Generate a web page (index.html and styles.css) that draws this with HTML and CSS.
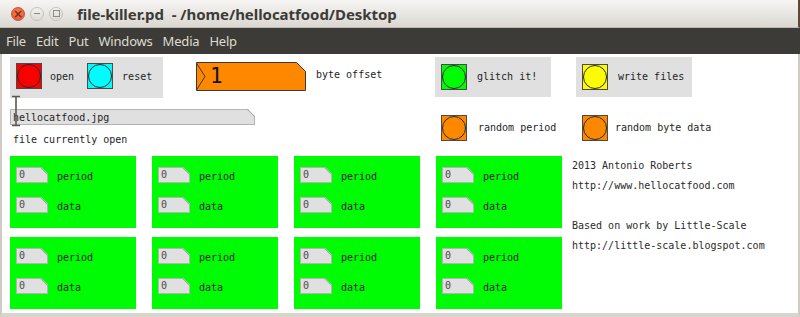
FILE: index.html
```html
<!DOCTYPE html>
<html lang="en">

<head>
    <meta charset="UTF-8">
    <meta name="viewport" content="width=device-width, initial-scale=1.0">
    <title>file-killer.pd</title>
    <link rel="stylesheet" href="styles.css">
</head>

<body>
    <div class="window">
        <!-- title bar -->
        <div class="titlebar">
            <div class="controls">
                <span class="ctl close">&times;</span>
                <span class="ctl min"><i class="dash"></i></span>
                <span class="ctl max"><i class="sq"></i></span>
            </div>
            <div class="title">file-killer.pd&nbsp; - /home/hellocatfood/Desktop</div>
        </div>

        <!-- menu -->
        <div class="menubar">
            <span>File</span><span>Edit</span><span>Put</span><span>Windows</span><span>Media</span><span>Help</span>
        </div>

        <!-- patch canvas -->
        <div class="canvas">
            <div class="row top">
                <div class="gbox main">
                    <div class="bang red"></div>
                    <span class="lbl open">open</span>
                    <div class="bang cyan"></div>
                    <span class="lbl reset">reset</span>
                </div>
                <div class="numbox">
                    <svg class="shape" width="110" height="29" viewBox="0 0 110 29">
                        <polygon points="0.5,0.5 100.5,0.5 109.5,9.5 109.5,28.5 0.5,28.5" fill="#ff8800" stroke="#3a3a3a" />
                        <polyline points="0.5,1 9,14.5 0.5,28" fill="none" stroke="#3a3a3a" />
                    </svg>
                    <span class="num">1</span>
                </div>
                <span class="lbl offset">byte offset</span>
                <div class="gbox glitch">
                    <div class="bang green"></div>
                    <span class="lbl">glitch it!</span>
                </div>
                <div class="gbox write">
                    <div class="bang yellow"></div>
                    <span class="lbl">write files</span>
                </div>
            </div>

            <div class="row mid">
                <div class="filecol">
                    <div class="symbol">hellocatfood.jpg</div>
                    <div class="lbl note">file currently open</div>
                </div>
                <div class="randgroup period">
                    <div class="bang orange"></div>
                    <span class="lbl">random period</span>
                </div>
                <div class="randgroup bytes">
                    <div class="bang orange"></div>
                    <span class="lbl">random byte data</span>
                </div>
            </div>

            <div class="row bottom">
                <div class="panels">
                    <div class="panel">
                        <div class="prow"><div class="small">0</div><span class="lbl">period</span></div>
                        <div class="prow"><div class="small">0</div><span class="lbl">data</span></div>
                    </div>
                    <div class="panel">
                        <div class="prow"><div class="small">0</div><span class="lbl">period</span></div>
                        <div class="prow"><div class="small">0</div><span class="lbl">data</span></div>
                    </div>
                    <div class="panel">
                        <div class="prow"><div class="small">0</div><span class="lbl">period</span></div>
                        <div class="prow"><div class="small">0</div><span class="lbl">data</span></div>
                    </div>
                    <div class="panel">
                        <div class="prow"><div class="small">0</div><span class="lbl">period</span></div>
                        <div class="prow"><div class="small">0</div><span class="lbl">data</span></div>
                    </div>
                    <div class="panel">
                        <div class="prow"><div class="small">0</div><span class="lbl">period</span></div>
                        <div class="prow"><div class="small">0</div><span class="lbl">data</span></div>
                    </div>
                    <div class="panel">
                        <div class="prow"><div class="small">0</div><span class="lbl">period</span></div>
                        <div class="prow"><div class="small">0</div><span class="lbl">data</span></div>
                    </div>
                    <div class="panel">
                        <div class="prow"><div class="small">0</div><span class="lbl">period</span></div>
                        <div class="prow"><div class="small">0</div><span class="lbl">data</span></div>
                    </div>
                    <div class="panel">
                        <div class="prow"><div class="small">0</div><span class="lbl">period</span></div>
                        <div class="prow"><div class="small">0</div><span class="lbl">data</span></div>
                    </div>
                </div>
                <div class="credits">
                    <div>2013 Antonio Roberts</div>
                    <div>http://www.hellocatfood.com</div>
                    <div class="gap"></div>
                    <div>Based on work by Little-Scale</div>
                    <div>http://little-scale.blogspot.com</div>
                </div>
            </div>

            <!-- mouse cursor -->
            <svg class="cursor" width="10" height="32" viewBox="0 0 10 32">
                <path d="M1 1.5 H9 M5 1.5 V30.5 M1 30.5 H9" stroke="#5a5a50" stroke-width="1.6" fill="none" />
            </svg>
        </div>
    </div>
</body>

</html>
```

FILE: styles.css
```css
/* colours */
:root {
    --title-top: #f6f5f3;
    --title-bottom: #dbd8d2;
    --title-text: #3c3b37;
    --menu-bg: #3c3b37;
    --menu-text: #dfdbd2;
    --frame: #cfcbc4;
    --box-gray: #e0e0e0;
    --pd-green: #00fc04;
    --ink: #1e1e1e;
}

html,
body {
    margin: 0;
    height: 100%;
    background: #ffffff;
}

.window {
    width: 800px;
    height: 317px;
    display: flex;
    flex-direction: column;
    overflow: hidden;
}

/* title bar */
.titlebar {
    height: 27px;
    flex: none;
    display: flex;
    align-items: center;
    background: linear-gradient(var(--title-top), var(--title-bottom));
    border-bottom: 1px solid #bfbab2;
    border-right: 2px solid #5b4a3a;
    box-sizing: content-box;
}

.controls {
    display: flex;
    gap: 5px;
    margin-left: 11px;
}

.ctl {
    width: 14px;
    height: 14px;
    border-radius: 50%;
    box-sizing: border-box;
    display: flex;
    align-items: center;
    justify-content: center;
    position: relative;
}

.ctl.close {
    background: radial-gradient(circle at 50% 35%, #f4815a, #e4532a);
    border: 1px solid #c9522e;
    color: #7a2c14;
    font: bold 12px/1 "DejaVu Sans", sans-serif;
}

.ctl.min,
.ctl.max {
    background: linear-gradient(#f3f2f0, #dddad5);
    border: 1px solid #c6c1b9;
}

.ctl .dash {
    width: 6px;
    height: 1px;
    background: #8d8a83;
}

.ctl .sq {
    width: 5px;
    height: 5px;
    border: 1px solid #8d8a83;
}

.title {
    margin-left: 14px;
    font: bold 15px "Noto Sans", sans-serif;
    letter-spacing: -0.05px;
    color: var(--title-text);
    white-space: pre;
}

/* menu */
.menubar {
    height: 26px;
    flex: none;
    display: flex;
    align-items: center;
    gap: 10px;
    padding-left: 6px;
    background: var(--menu-bg);
    color: var(--menu-text);
    font: 13px "Noto Sans", sans-serif;
    letter-spacing: -0.2px;
}

/* canvas */
.canvas {
    position: relative;
    flex: 1;
    border-left: 2px solid var(--frame);
    border-right: 2px solid var(--frame);
    border-bottom: 4px solid #d8d4ce;
    background: #ffffff;
    font: 10px/12px "DejaVu Sans Mono", monospace;
    color: var(--ink);
}

.row {
    display: flex;
    align-items: flex-start;
}

.lbl {
    white-space: pre;
    line-height: 12px;
}

.gbox {
    background: var(--box-gray);
    display: flex;
    align-items: center;
    box-sizing: border-box;
    padding: 6px;
    align-self: flex-start;
}

/* bangs */
.bang {
    width: 26px;
    height: 26px;
    flex: none;
    box-sizing: border-box;
    border: 1px solid #4a4a4a;
    position: relative;
}

.bang::before {
    content: "";
    position: absolute;
    inset: 0;
    border: 1px solid #2a2a2a;
    border-radius: 50%;
}

.bang.red { background: #fc0000; }
.bang.cyan { background: #00fcfc; }
.bang.green { background: #00fc04; }
.bang.yellow { background: #fcfc00; }
.bang.orange { background: #fc8800; }

/* top row */
.row.top {
    height: 44px;
    padding-top: 3px;
    box-sizing: border-box;
}

.gbox.main {
    width: 153px;
    height: 41px;
    margin-left: 8px;
    align-items: flex-start;
}

.gbox.main .lbl {
    margin-top: 8px;
}

.lbl.open {
    margin-left: 8px;
    margin-right: 13px;
}

.lbl.reset {
    margin-left: 9px;
}

.numbox {
    position: relative;
    width: 110px;
    height: 29px;
    margin-left: 33px;
    margin-top: 5px;
}

.numbox .shape {
    position: absolute;
    top: 0;
    left: 0;
}

.numbox .num {
    position: relative;
    display: block;
    padding-left: 14px;
    font: 21px/29px "DejaVu Sans Mono", monospace;
    color: #111111;
}

.lbl.offset {
    width: 109px;
    margin-left: 10px;
    margin-top: 12px;
}

.gbox.glitch {
    width: 116px;
    height: 40px;
    margin-left: 10px;
    padding-top: 7px;
    align-items: flex-start;
}

.gbox.write {
    width: 116px;
    height: 40px;
    margin-left: 25px;
    padding-top: 7px;
    align-items: flex-start;
}

.gbox.glitch .lbl,
.gbox.write .lbl {
    margin-left: 10px;
    margin-top: 7px;
}

/* middle row */
.row.mid {
    height: 52px;
}

.filecol {
    width: 425px;
    margin-left: 8px;
    flex: none;
}

.symbol {
    position: relative;
    width: 245px;
    height: 16px;
    margin-top: 11px;
    box-sizing: border-box;
    padding-left: 2px;
    line-height: 15px;
    background: var(--box-gray);
    border: 1px solid #b4b4b4;
    clip-path: polygon(0 0, calc(100% - 7px) 0, 100% 7px, 100% 100%, 0 100%);
}

.symbol::after,
.small::after {
    content: "";
    position: absolute;
    top: -1px;
    right: -1px;
    width: 8px;
    height: 8px;
    background: linear-gradient(45deg, transparent calc(50% - 0.8px), #a8a8a8 50%, transparent calc(50% + 0.8px));
}

.lbl.note {
    margin-top: 9px;
    margin-left: 3px;
}

.randgroup {
    display: flex;
    align-items: center;
    margin-top: 17px;
    flex: none;
}

.randgroup.period {
    width: 141px;
    margin-left: 6px;
}

.randgroup.period .lbl {
    margin-left: 11px;
}

.randgroup.bytes .lbl {
    margin-left: 7px;
}

/* green panels */
.row.bottom {
    padding-top: 6px;
}

.panels {
    margin-left: 8px;
    display: grid;
    grid-template-columns: repeat(4, 126px);
    grid-auto-rows: 72px;
    column-gap: 16px;
    row-gap: 9px;
}

.panel {
    background: var(--pd-green);
    box-sizing: border-box;
    padding: 11px 0 0 6px;
    display: flex;
    flex-direction: column;
    gap: 14px;
}

.prow {
    display: flex;
    align-items: center;
}

.prow .lbl {
    margin-left: 9px;
    margin-top: 3px;
}

.small {
    position: relative;
    width: 32px;
    height: 16px;
    box-sizing: border-box;
    padding-left: 2px;
    line-height: 14px;
    color: #4a4a4a;
    background: var(--box-gray);
    border: 1px solid #b4b4b4;
    clip-path: polygon(0 0, calc(100% - 7px) 0, 100% 7px, 100% 100%, 0 100%);
}

.credits {
    margin-left: 10px;
    line-height: 20px;
    color: #2a2a2a;
}

.credits div {
    white-space: nowrap;
    height: 20px;
}

.cursor {
    position: absolute;
    left: 9px;
    top: 41px;
}
```
